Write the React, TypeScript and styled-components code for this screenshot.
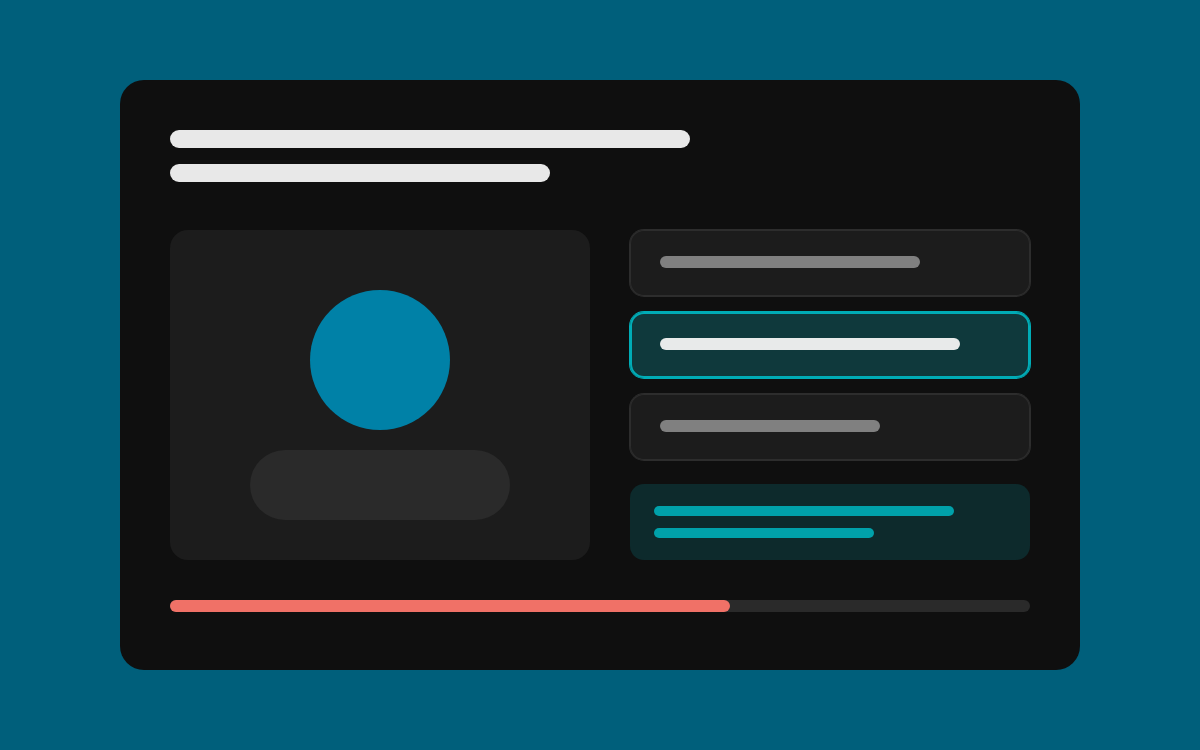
import React from "react";
import styled, { createGlobalStyle } from "styled-components";

const GlobalStyle = createGlobalStyle`
  * {
    box-sizing: border-box;
  }
  body {
    margin: 0;
    background: #005f7b;
    font-family: "Inter", sans-serif;
  }
`;

const Page = styled.main`
  min-height: 100vh;
  padding: 80px 10%;
`;

const Card = styled.section`
  display: flex;
  flex-direction: column;
  padding: 50px 50px 58px;
  border-radius: 24px;
  background: #0f0f0f;
`;

const Heading = styled.header`
  display: flex;
  flex-direction: column;
  gap: 16px;
  margin-bottom: 48px;
`;

const Line = styled.span<{ $width: number; $height: number; $color: string }>`
  display: block;
  width: ${(p) => p.$width}px;
  max-width: 100%;
  height: ${(p) => p.$height}px;
  border-radius: 9px;
  background: ${(p) => p.$color};
`;

const Columns = styled.div`
  display: grid;
  grid-template-columns: 21fr 20fr;
  gap: 40px;
  margin-bottom: 40px;
`;

const Media = styled.div`
  display: flex;
  flex-direction: column;
  align-items: center;
  justify-content: center;
  gap: 20px;
  padding: 60px 40px 40px;
  border-radius: 18px;
  background: #1c1c1c;
`;

const Avatar = styled.div`
  width: 140px;
  height: 140px;
  border-radius: 50%;
  background: #0081a7;
`;

const Plate = styled.div`
  width: 260px;
  max-width: 100%;
  height: 70px;
  border-radius: 35px;
  background: #2a2a2a;
`;

const Answers = styled.div`
  display: flex;
  flex-direction: column;
  gap: 24px;
`;

const Options = styled.div`
  display: flex;
  flex-direction: column;
  gap: 16px;
`;

/* The outline straddles the edge of the box, half outside and half inside. */
const Option = styled.button<{ $active?: boolean }>`
  display: flex;
  align-items: flex-start;
  width: 100%;
  height: 66px;
  padding: 26px 30px;
  border: 0;
  border-radius: 14px;
  background: ${(p) => (p.$active ? "#0f393c" : "#1c1c1c")};
  box-shadow: ${(p) =>
    p.$active
      ? "0 0 0 1px #00acb6, inset 0 0 0 2px #00acb6"
      : "0 0 0 1px #2d2d2d, inset 0 0 0 1px #2d2d2d"};
  cursor: pointer;
`;

const Hint = styled.aside`
  display: flex;
  flex-direction: column;
  gap: 12px;
  padding: 22px 24px;
  border-radius: 14px;
  background: #0d2a2c;
`;

const Track = styled.div`
  height: 12px;
  border-radius: 6px;
  background: #2a2a2a;
`;

const Fill = styled.div`
  height: 100%;
  border-radius: 6px;
  background: #f07167;
`;

const options = [
  { id: 1, width: 260, active: false },
  { id: 2, width: 300, active: true },
  { id: 3, width: 220, active: false },
];

const progress = { value: 560, max: 860 };

export default function App() {
  return (
    <>
      <GlobalStyle />
      <Page>
        <Card>
          <Heading>
            <Line $width={520} $height={18} $color="#e8e8e8" />
            <Line $width={380} $height={18} $color="#e8e8e8" />
          </Heading>
          <Columns>
            <Media>
              <Avatar />
              <Plate />
            </Media>
            <Answers>
              <Options>
                {options.map((o) => (
                  <Option
                    key={o.id}
                    type="button"
                    $active={o.active}
                    aria-pressed={o.active}
                    aria-label={`Option ${o.id}`}
                  >
                    <Line
                      $width={o.width}
                      $height={12}
                      $color={o.active ? "#e8eaea" : "#808080"}
                    />
                  </Option>
                ))}
              </Options>
              <Hint>
                <Line $width={300} $height={10} $color="#00a1aa" />
                <Line $width={220} $height={10} $color="#00a1aa" />
              </Hint>
            </Answers>
          </Columns>
          <Track
            role="progressbar"
            aria-label="Progress"
            aria-valuenow={progress.value}
            aria-valuemin={0}
            aria-valuemax={progress.max}
          >
            <Fill style={{ width: `${(progress.value / progress.max) * 100}%` }} />
          </Track>
        </Card>
      </Page>
    </>
  );
}
